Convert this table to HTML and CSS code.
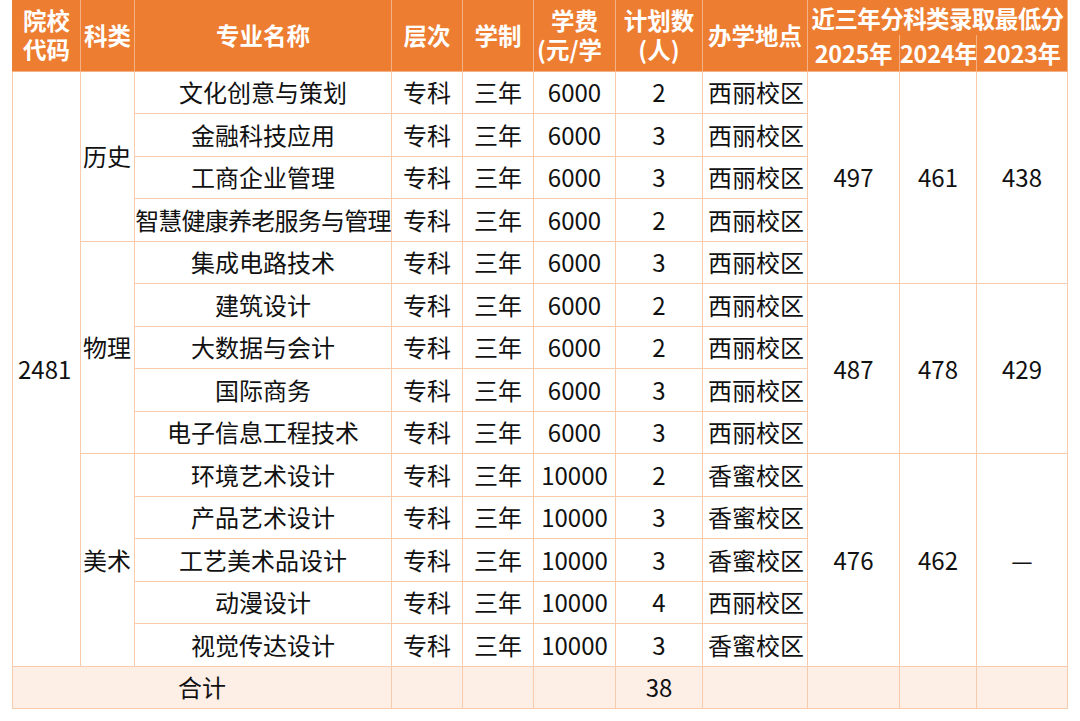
FILE: index.html
```html
<!DOCTYPE html>
<html lang="zh-CN">
<head>
<meta charset="utf-8">
<title>招生计划</title>
<link rel="stylesheet" href="styles.css">
</head>
<body>
<table class="plan">
  <colgroup>
    <col class="c-code"><col class="c-type"><col class="c-major"><col class="c-level"><col class="c-years"><col class="c-fee"><col class="c-num"><col class="c-site"><col class="c-s25"><col class="c-s24"><col class="c-s23">
  </colgroup>
  <thead>
    <tr class="h1">
      <th rowspan="2" class="two"><span class="ln">院校</span><span class="ln">代码</span></th>
      <th rowspan="2">科类</th>
      <th rowspan="2">专业名称</th>
      <th rowspan="2">层次</th>
      <th rowspan="2">学制</th>
      <th rowspan="2" class="two fee"><span class="ln mid">学费</span><span class="ln">(元/学</span></th>
      <th rowspan="2" class="two"><span class="ln">计划数</span><span class="ln">(人)</span></th>
      <th rowspan="2">办学地点</th>
      <th colspan="3" class="title">近三年分科类录取最低分</th>
    </tr>
    <tr class="h2">
      <th class="yr">2025年</th>
      <th class="yr">2024年</th>
      <th class="yr">2023年</th>
    </tr>
  </thead>
  <tbody>
    <tr>
      <td rowspan="14" class="code">2481</td>
      <td rowspan="4" class="type">历史</td>
      <td>文化创意与策划</td><td>专科</td><td>三年</td><td>6000</td><td>2</td><td class="site">西丽校区</td>
      <td rowspan="5">497</td><td rowspan="5">461</td><td rowspan="5">438</td>
    </tr>
    <tr><td>金融科技应用</td><td>专科</td><td>三年</td><td>6000</td><td>3</td><td class="site">西丽校区</td></tr>
    <tr><td>工商企业管理</td><td>专科</td><td>三年</td><td>6000</td><td>3</td><td class="site">西丽校区</td></tr>
    <tr><td class="tight">智慧健康养老服务与管理</td><td>专科</td><td>三年</td><td>6000</td><td>2</td><td class="site">西丽校区</td></tr>
    <tr>
      <td rowspan="5" class="type">物理</td>
      <td>集成电路技术</td><td>专科</td><td>三年</td><td>6000</td><td>3</td><td class="site">西丽校区</td>
    </tr>
    <tr>
      <td>建筑设计</td><td>专科</td><td>三年</td><td>6000</td><td>2</td><td class="site">西丽校区</td>
      <td rowspan="4">487</td><td rowspan="4">478</td><td rowspan="4">429</td>
    </tr>
    <tr><td>大数据与会计</td><td>专科</td><td>三年</td><td>6000</td><td>2</td><td class="site">西丽校区</td></tr>
    <tr><td>国际商务</td><td>专科</td><td>三年</td><td>6000</td><td>3</td><td class="site">西丽校区</td></tr>
    <tr><td>电子信息工程技术</td><td>专科</td><td>三年</td><td>6000</td><td>3</td><td class="site">西丽校区</td></tr>
    <tr>
      <td rowspan="5" class="type">美术</td>
      <td>环境艺术设计</td><td>专科</td><td>三年</td><td>10000</td><td>2</td><td class="site">香蜜校区</td>
      <td rowspan="5">476</td><td rowspan="5">462</td><td rowspan="5">—</td>
    </tr>
    <tr><td>产品艺术设计</td><td>专科</td><td>三年</td><td>10000</td><td>3</td><td class="site">香蜜校区</td></tr>
    <tr><td>工艺美术品设计</td><td>专科</td><td>三年</td><td>10000</td><td>3</td><td class="site">香蜜校区</td></tr>
    <tr><td>动漫设计</td><td>专科</td><td>三年</td><td>10000</td><td>4</td><td class="site">西丽校区</td></tr>
    <tr><td>视觉传达设计</td><td>专科</td><td>三年</td><td>10000</td><td>3</td><td class="site">香蜜校区</td></tr>
    <tr class="total">
      <td colspan="3">合计</td><td></td><td></td><td></td><td>38</td><td></td><td></td><td></td><td></td>
    </tr>
  </tbody>
</table>
</body>
</html>
```

FILE: styles.css
```css
html, body {
  margin: 0;
  padding: 0;
  background: #ffffff;
}

body {
  padding-left: 12px;
  font-family: "Noto Sans CJK SC", "Noto Sans", sans-serif;
}

.plan {
  border-collapse: collapse;
  table-layout: fixed;
  width: 1056px;
  border-left: 1.5px solid #ED7D31;
  border-right: 1.5px solid #ED7D31;
  border-bottom: 1.5px solid #ED7D31;
  color: #111111;
  font-size: 24px;
}

.c-code { width: 68px; }
.c-type { width: 54px; }
.c-major { width: 257px; }
.c-level { width: 71px; }
.c-years { width: 71px; }
.c-fee { width: 82px; }
.c-num { width: 87px; }
.c-site { width: 105px; }
.c-s25 { width: 92px; }
.c-s24 { width: 77px; }
.c-s23 { width: 91px; }

.plan th {
  background: #ED7D31;
  color: #ffffff;
  font-weight: 700;
  font-size: 23.5px;
  line-height: 30px;
  padding: 0;
  text-align: center;
  white-space: nowrap;
  overflow: hidden;
  border: 1px solid #F4B183;
  border-top: none;
}

.plan .h1 th:first-child { border-left: none; }
.plan .h1 { height: 35px; }
.plan .h2 { height: 36px; }

.plan th .ln {
  display: block;
  height: 29px;
  line-height: 29px;
}

.plan th.title {
  border-bottom: none;
  letter-spacing: -0.6px;
  vertical-align: middle;
}

.plan th.yr {
  border-top: none;
  vertical-align: middle;
  letter-spacing: -0.3px;
}

.plan th.fee {
  text-align: left;
  padding-left: 3px;
}

.plan th.fee .mid {
  text-align: center;
  padding-right: 3px;
}

.plan td {
  border: 1.5px solid #F8CBAD;
  padding: 0;
  height: 41px;
  line-height: 30px;
  text-align: center;
  vertical-align: middle;
  white-space: nowrap;
  overflow: hidden;
}

.plan tbody tr { height: 42.5px; }

.plan td.site {
  text-align: left;
  padding-left: 5px;
}

.plan td.code {
  text-align: left;
  padding-left: 5px;
}

.plan td.type {
  text-align: left;
  padding-left: 2px;
  overflow: visible;
}

.plan td.tight {
  letter-spacing: -0.75px;
}

.plan tr.total td {
  background: #FDEEE6;
}
```
